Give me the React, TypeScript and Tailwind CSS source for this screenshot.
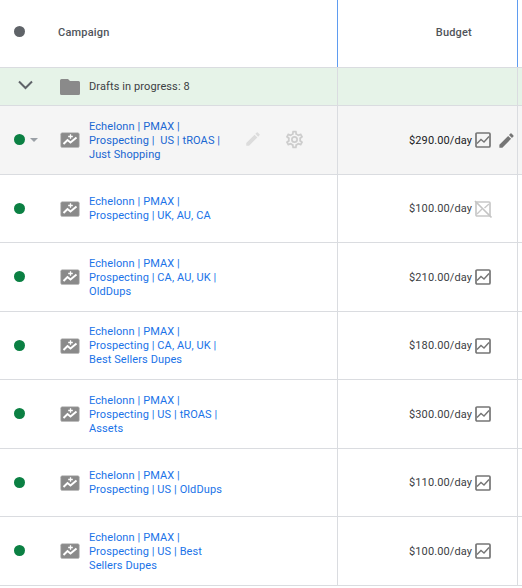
import React from "react";

const Spark = () => (
  <svg width="20" height="16" viewBox="0 0 20 16" className="shrink-0">
    <rect x="0.7" y="0.7" width="18.6" height="14.8" rx="1.5" fill="#8a8a8a" stroke="#b8b8b8" strokeWidth="0.6" />
    <path d="M3.5 12 L7.5 8 L10.5 10.5 L16.5 5.5" fill="none" stroke="#fff" strokeWidth="2" />
    <path d="M10.5 2.2 V6.8 M8.2 4.5 H12.8" stroke="#fff" strokeWidth="1.3" />
  </svg>
);

const Chart = ({ off }: { off?: boolean }) => (
  <svg width="16" height="16" viewBox="0 0 16 16" className="shrink-0 overflow-visible">
    <rect x="1" y="1" width="14" height="14" rx="1" fill="none" stroke={off ? "#c8c8c8" : "#757575"} strokeWidth="1.7" />
    {off ? (
      <>
        <path d="M0 0 L16.5 16.5" stroke="#c4c4c4" strokeWidth="1.7" />
        <path d="M2 13 L7 8 M9.5 7 L14 3" fill="none" stroke="#c8c8c8" strokeWidth="1.4" />
      </>
    ) : (
      <path d="M2 11.5 L6 7.5 L9 10 L14 4.5" fill="none" stroke="#757575" strokeWidth="1.4" />
    )}
  </svg>
);

const Pencil = ({ color, size = 16 }: { color: string; size?: number }) => (
  <svg width={size} height={size} viewBox="0 0 24 24" className="shrink-0">
    <path fill={color} d="M3 17.25V21h3.75L17.81 9.94l-3.75-3.75L3 17.25zM20.71 7.04a1 1 0 0 0 0-1.41l-2.34-2.34a1 1 0 0 0-1.41 0l-1.83 1.83 3.75 3.75 1.83-1.83z" />
  </svg>
);

const Gear = () => (
  <svg width="21" height="21" viewBox="0 0 24 24" className="shrink-0">
    <path fill="#cdcdcd" d="M19.43 12.98c.04-.32.07-.64.07-.98s-.03-.66-.07-.98l2.11-1.65a.5.5 0 0 0 .12-.64l-2-3.46a.5.5 0 0 0-.61-.22l-2.49 1a7.3 7.3 0 0 0-1.69-.98l-.38-2.65A.49.49 0 0 0 14 2h-4a.49.49 0 0 0-.49.42l-.38 2.65c-.61.25-1.17.59-1.69.98l-2.49-1a.49.49 0 0 0-.61.22l-2 3.46a.49.49 0 0 0 .12.64l2.11 1.65c-.04.32-.07.65-.07.98s.03.66.07.98l-2.11 1.65a.5.5 0 0 0-.12.64l2 3.46c.12.22.39.3.61.22l2.49-1c.52.4 1.08.73 1.69.98l.38 2.65c.03.24.24.42.49.42h4c.25 0 .46-.18.49-.42l.38-2.65c.61-.25 1.17-.59 1.69-.98l2.49 1c.23.09.49 0 .61-.22l2-3.46a.5.5 0 0 0-.12-.64l-2.11-1.65zM17.45 11.27c.04.31.05.52.05.73s-.02.43-.05.73l-.14 1.13.89.7 1.08.84-.7 1.21-1.27-.51-1.04-.42-.9.68c-.43.32-.84.56-1.25.73l-1.06.43-.16 1.13-.2 1.35h-1.4l-.19-1.35-.16-1.13-1.06-.43a5.7 5.7 0 0 1-1.23-.71l-.91-.7-1.06.43-1.27.51-.7-1.21 1.08-.84.89-.7-.14-1.13c-.03-.31-.05-.54-.05-.74s.02-.43.05-.73l.14-1.13-.89-.7-1.08-.84.7-1.21 1.27.51 1.04.42.9-.68c.43-.32.84-.56 1.25-.73l1.06-.43.16-1.13.2-1.35h1.39l.19 1.35.16 1.13 1.06.43c.43.18.83.41 1.23.71l.91.7 1.06-.43 1.27-.51.7 1.21-1.07.85-.89.7.14 1.13zM12 8a4 4 0 1 0 0 8 4 4 0 0 0 0-8zm0 6a2 2 0 1 1 0-4 2 2 0 0 1 0 4z" />
  </svg>
);

const rows = [
  { tall: true, lines: ["Echelonn | PMAX |", "Prospecting |  US | tROAS |", "Just Shopping"], budget: "$290.00/day", hover: true },
  { tall: false, lines: ["Echelonn | PMAX |", "Prospecting | UK, AU, CA"], budget: "$100.00/day", off: true },
  { tall: true, lines: ["Echelonn | PMAX |", "Prospecting | CA, AU, UK |", "OldDups"], budget: "$210.00/day" },
  { tall: false, lines: ["Echelonn | PMAX |", "Prospecting | CA, AU, UK |", "Best Sellers Dupes"], budget: "$180.00/day" },
  { tall: true, lines: ["Echelonn | PMAX |", "Prospecting | US | tROAS |", "Assets"], budget: "$300.00/day" },
  { tall: false, lines: ["Echelonn | PMAX |", "Prospecting | US | OldDups"], budget: "$110.00/day" },
  { tall: true, lines: ["Echelonn | PMAX |", "Prospecting | US | Best", "Sellers Dupes"], budget: "$100.00/day" },
];

export default function App() {
  return (
    <div className="w-[522px] h-[588px] overflow-hidden bg-white font-['Roboto',sans-serif] text-[11px] leading-[14px] tracking-[0.1px] text-[#3c4043]">
      {/* Header */}
      <div className="flex h-[68px] border-b border-[#dadce0]">
        <div className="w-[338px] flex items-center border-r border-[#5f9cf0] pb-[2px]">
          <div className="w-[58px] pl-[14px] mb-[2px]">
            <div className="w-[11px] h-[11px] rounded-full bg-[#5f6368]" />
          </div>
          <span className="font-medium tracking-[0.2px] text-[#50545a]">Campaign</span>
        </div>
        <div className="w-[180px] flex items-center justify-end pr-[45px] border-r border-[#5f9cf0] pb-[2px]">
          <span className="font-medium tracking-[0.2px] text-[#50545a]">Budget</span>
        </div>
      </div>

      {/* Drafts */}
      <div className="flex h-[38px] border-b border-[#dadce0] bg-[#e6f3e8]">
        <div className="w-[338px] flex items-center border-r border-[#dadce0]">
          <div className="w-[60px] pl-[18px] pb-[4px]">
            <svg width="15" height="10" viewBox="0 0 15 10" className="block">
              <path d="M1 1.5 L7.5 8 L14 1.5" fill="none" stroke="#5f6368" strokeWidth="2" />
            </svg>
          </div>
          <svg width="20" height="16" viewBox="0 0 20 16" className="shrink-0">
            <path fill="#8a8a8a" d="M1.5 0 H8 L10 2 H18.5 A1.5 1.5 0 0 1 20 3.5 V14.5 A1.5 1.5 0 0 1 18.5 16 H1.5 A1.5 1.5 0 0 1 0 14.5 V1.5 A1.5 1.5 0 0 1 1.5 0 Z" />
          </svg>
          <span className="ml-[9px]">Drafts in progress: 8</span>
        </div>
        <div className="w-[180px] border-r border-[#dadce0]" />
      </div>

      {/* Rows */}
      {rows.map((r, i) => (
        <div
          key={i}
          className={`flex border-b border-[#dadce0] ${r.tall ? "h-[69px]" : "h-[68px]"} ${r.hover ? "bg-[#f5f5f5]" : "bg-white"}`}
        >
          <div className="w-[338px] flex items-center border-r border-[#dadce0]">
            <div className={`w-[60px] pl-[14px] flex items-center gap-[5px] ${r.tall ? "pb-[1px]" : ""}`}>
              <div className="w-[11px] h-[11px] rounded-full bg-[#0b8043]" />
              {r.hover && <div className="w-0 h-0 border-x-[4px] border-x-transparent border-t-[4px] border-t-[#9aa0a6]" />}
            </div>
            <Spark />
            <div className={`ml-[9px] w-[147px] whitespace-pre ${r.hover ? "text-[#1967d2]" : "text-[#1a73e8]"} ${r.tall ? "pt-[2px]" : ""}`}>
              {r.lines.map((l, j) => (
                <div key={j}>{l}</div>
              ))}
            </div>
            {r.hover && (
              <div className="flex items-center ml-[8px] gap-[22px] pb-[2px]">
                <Pencil color="#dcdcdc" size={18} />
                <Gear />
              </div>
            )}
          </div>
          <div className="w-[180px] flex items-center justify-end border-r border-[#dadce0]">
            <span className={`${r.hover ? "text-[#202124]" : "text-[#3c4043]"} ${r.tall ? "pt-[2px]" : ""}`}>{r.budget}</span>
            <span className="ml-[3px] mr-[26px] relative">
              <Chart off={r.off} />
              {r.hover && (
                <span className="absolute left-[22px] top-[-1px]">
                  <Pencil color="#757575" size={19} />
                </span>
              )}
            </span>
          </div>
        </div>
      ))}
    </div>
  );
}
